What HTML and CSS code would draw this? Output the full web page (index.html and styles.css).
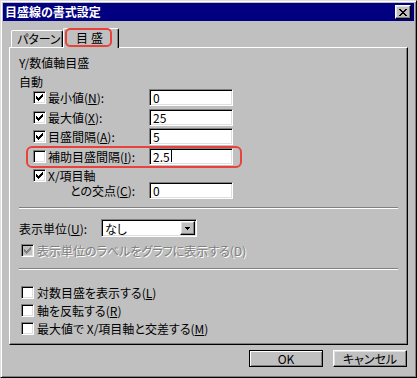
FILE: index.html
```html
<!DOCTYPE html>
<html lang="ja">
<head>
    <meta charset="UTF-8">
    <meta name="viewport" content="width=device-width, initial-scale=1.0">
    <title>目盛線の書式設定</title>
    <link rel="stylesheet" href="styles.css">
</head>
<body>
    <div class="window">
        <div class="titlebar">
            <span class="title">目盛線の書式設定</span>
            <span class="close-btn">
                <svg viewBox="0 0 8 7" width="8" height="7" shape-rendering="crispEdges"><path d="M0 0h2v1h-2zM6 0h2v1h-2zM1 1h2v1h-2zM5 1h2v1h-2zM2 2h4v1h-4zM3 3h2v1h-2zM2 4h4v1h-4zM1 5h2v1h-2zM5 5h2v1h-2zM0 6h2v1h-2zM6 6h2v1h-2z"/></svg>
            </span>
        </div>
        <div class="dialog">
            <div class="tabs">
                <div class="tab">パターン</div>
                <div class="tab tab-active"><span class="tab-mark"></span>目盛</div>
            </div>
            <div class="panel">
                <div class="heading">Y/数値軸目盛</div>
                <div class="heading sub">自動</div>
                <div class="scale">
                    <div class="row">
                        <span class="cb"><svg viewBox="0 0 7 7" width="7" height="7" shape-rendering="crispEdges"><path d="M6 0h1v1h-1zM5 1h2v1h-2zM0 2h1v1h-1zM4 2h3v1h-3zM0 3h2v1h-2zM3 3h3v1h-3zM0 4h5v1h-5zM1 5h3v1h-3zM2 6h1v1h-1z"/></svg></span>
                        <span class="label">最小値(<u>N</u>):</span>
                        <span class="field">0</span>
                    </div>
                    <div class="row">
                        <span class="cb"><svg viewBox="0 0 7 7" width="7" height="7" shape-rendering="crispEdges"><path d="M6 0h1v1h-1zM5 1h2v1h-2zM0 2h1v1h-1zM4 2h3v1h-3zM0 3h2v1h-2zM3 3h3v1h-3zM0 4h5v1h-5zM1 5h3v1h-3zM2 6h1v1h-1z"/></svg></span>
                        <span class="label">最大値(<u>X</u>):</span>
                        <span class="field">25</span>
                    </div>
                    <div class="row">
                        <span class="cb"><svg viewBox="0 0 7 7" width="7" height="7" shape-rendering="crispEdges"><path d="M6 0h1v1h-1zM5 1h2v1h-2zM0 2h1v1h-1zM4 2h3v1h-3zM0 3h2v1h-2zM3 3h3v1h-3zM0 4h5v1h-5zM1 5h3v1h-3zM2 6h1v1h-1z"/></svg></span>
                        <span class="label">目盛間隔(<u>A</u>):</span>
                        <span class="field">5</span>
                    </div>
                    <div class="row row-mark">
                        <span class="cb"></span>
                        <span class="label">補助目盛間隔(<u>I</u>):</span>
                        <span class="field">2.5<span class="caret"></span></span>
                    </div>
                    <div class="row row-x">
                        <span class="cb"><svg viewBox="0 0 7 7" width="7" height="7" shape-rendering="crispEdges"><path d="M6 0h1v1h-1zM5 1h2v1h-2zM0 2h1v1h-1zM4 2h3v1h-3zM0 3h2v1h-2zM3 3h3v1h-3zM0 4h5v1h-5zM1 5h3v1h-3zM2 6h1v1h-1z"/></svg></span>
                        <span class="label">X/項目軸</span>
                    </div>
                    <div class="row row-cross">
                        <span class="label">との交点(<u>C</u>):</span>
                        <span class="field">0</span>
                    </div>
                </div>

                <div class="sep"></div>

                <div class="unit-row">
                    <span class="label">表示単位(<u>U</u>):</span>
                    <span class="select">
                        <span class="select-text">なし</span>
                        <span class="select-btn"><svg viewBox="0 0 5 3" width="5" height="3" shape-rendering="crispEdges"><path d="M0 0h5v1h-5zM1 1h3v1h-3zM2 2h1v1h-1z"/></svg></span>
                    </span>
                </div>
                <div class="check-row disabled">
                    <span class="cb"><svg viewBox="0 0 7 7" width="7" height="7" shape-rendering="crispEdges"><path d="M6 0h1v1h-1zM5 1h2v1h-2zM0 2h1v1h-1zM4 2h3v1h-3zM0 3h2v1h-2zM3 3h3v1h-3zM0 4h5v1h-5zM1 5h3v1h-3zM2 6h1v1h-1z"/></svg></span>
                    <span>表示単位のラベルをグラフに表示する(D)</span>
                </div>

                <div class="sep sep-low"></div>

                <div class="options">
                    <div class="check-row">
                        <span class="cb"></span>
                        <span>対数目盛を表示する(<u>L</u>)</span>
                    </div>
                    <div class="check-row">
                        <span class="cb"></span>
                        <span>軸を反転する(<u>R</u>)</span>
                    </div>
                    <div class="check-row">
                        <span class="cb"></span>
                        <span>最大値で X/項目軸と交差する(<u>M</u>)</span>
                    </div>
                </div>
            </div>
            <div class="buttons">
                <span class="btn btn-default">OK</span>
                <span class="btn">キャンセル</span>
            </div>
        </div>
    </div>
</body>
</html>
```

FILE: styles.css
```css
* {
    box-sizing: border-box;
}
body {
    margin: 0;
    background-color: #c0c0c0;
    font-family: "Noto Sans CJK JP", "Noto Sans", sans-serif;
    font-size: 12px;
    font-feature-settings: "palt";
    color: #000;
}
.window {
    width: 417px;
    height: 378px;
    padding: 2px;
    border: 1px solid;
    border-color: #dfdfdf #000 #000 #dfdfdf;
    box-shadow: inset 1px 1px 0 #fff, inset -1px -1px 0 #808080;
}
.titlebar {
    height: 18px;
    background-color: #000080;
    display: flex;
    align-items: center;
    justify-content: space-between;
    padding: 0 3px 0 2px;
}
.title {
    color: #fff;
    font-weight: bold;
    line-height: 18px;
}
.close-btn,
.select-btn,
.btn {
    background-color: #c0c0c0;
    border: 1px solid;
    border-color: #fff #000 #000 #fff;
    box-shadow: inset -1px -1px 0 #808080, inset 1px 1px 0 #dfdfdf;
}
.close-btn {
    width: 16px;
    height: 14px;
    display: flex;
    align-items: center;
    justify-content: center;
    padding-right: 1px;
}
.close-btn svg,
.cb svg,
.select-btn svg {
    display: block;
}
.dialog {
    padding: 7px 6px 0;
}
.tabs {
    display: flex;
    align-items: flex-end;
    height: 19px;
    padding-left: 2px;
}
.tab {
    width: 52px;
    height: 17px;
    padding-left: 5px;
    border-top: 1px solid #fff;
    border-left: 1px solid #fff;
    border-right: 1px solid #000;
    border-radius: 2px 2px 0 0;
    box-shadow: inset -1px 0 0 #808080;
    line-height: 15px;
}
.tab-active {
    position: relative;
    z-index: 1;
    width: 56px;
    height: 20px;
    margin-bottom: -1px;
    padding-left: 0;
    background-color: #c0c0c0;
    text-align: center;
    letter-spacing: 3px;
    line-height: 18px;
}
.tab-mark {
    position: absolute;
    left: 1px;
    top: -1px;
    width: 47px;
    height: 19px;
    border: 2px solid #e8423d;
    border-radius: 5px;
}
.panel {
    height: 298px;
    border: 1px solid;
    border-color: #fff #000 #000 #fff;
    box-shadow: inset -1px -1px 0 #808080;
    padding: 8px 9px 0 9px;
}
.heading {
    line-height: 14px;
}
.sub {
    margin-top: 5px;
    line-height: 13px;
}
.scale {
    width: 200px;
    margin-left: 14px;
}
.row {
    display: flex;
    align-items: center;
    height: 19.5px;
}
.cb {
    flex: none;
    width: 13px;
    height: 13px;
    background-color: #fff;
    border: 1px solid;
    border-color: #808080 #fff #fff #808080;
    box-shadow: inset 1px 1px 0 #000, inset -1px -1px 0 #dfdfdf;
    display: flex;
    align-items: center;
    justify-content: center;
}
.row .cb {
    margin-right: 2px;
}
.label {
    width: 101px;
    white-space: nowrap;
}
.field {
    align-self: flex-start;
    margin-top: 1px;
    width: 84px;
    height: 17px;
    background-color: #fff;
    border: 1px solid;
    border-color: #808080 #fff #fff #808080;
    box-shadow: inset 1px 1px 0 #000, inset -1px -1px 0 #dfdfdf;
    padding-left: 3px;
    display: flex;
    align-items: center;
    line-height: 13px;
}
.caret {
    width: 1px;
    height: 12px;
    margin-left: 1px;
    background-color: #000;
}
.row-mark {
    position: relative;
}
.row-mark::after {
    content: "";
    position: absolute;
    left: -7px;
    right: -9px;
    top: -1px;
    bottom: -2px;
    border: 2px solid #e8423d;
    border-radius: 6px;
}
.row-x {
    height: 18px;
}
.row-cross {
    height: 17px;
    margin-top: -2px;
    padding-left: 37px;
}
.row-cross .label {
    width: 79px;
}
.row-cross .field {
    margin-top: 0;
}
.sep {
    height: 2px;
    margin-top: 8px;
    border-top: 1px solid #808080;
    border-bottom: 1px solid #fff;
}
.sep-low {
    margin-top: 10px;
}
.unit-row {
    display: flex;
    align-items: center;
    height: 18px;
    margin-top: 10px;
}
.unit-row .label {
    width: 82px;
}
.select {
    width: 96px;
    height: 18px;
    background-color: #fff;
    border: 1px solid;
    border-color: #808080 #fff #fff #808080;
    box-shadow: inset 1px 1px 0 #000, inset -1px -1px 0 #dfdfdf;
    padding: 1px 1px 1px 3px;
    display: flex;
    align-items: center;
}
.select-text {
    flex: 1;
}
.select-btn {
    width: 15px;
    height: 14px;
    display: flex;
    align-items: center;
    justify-content: center;
}
.check-row {
    display: flex;
    align-items: center;
    height: 16px;
    margin-left: 2px;
    white-space: nowrap;
}
.check-row .cb {
    margin-right: 3px;
}
.disabled {
    margin-top: 5px;
    color: #808080;
    text-shadow: 1px 1px 0 #fff;
}
.disabled .cb {
    background-color: #c0c0c0;
}
.disabled .cb svg {
    fill: #808080;
}
.options {
    margin-top: 13px;
}
.options .check-row {
    height: 18px;
}
.buttons {
    display: flex;
    justify-content: flex-end;
    gap: 10px;
    margin-top: 5px;
    padding-right: 1px;
}
.btn {
    width: 74px;
    height: 17px;
    text-align: center;
    line-height: 15px;
}
.btn-default {
    border-color: #000;
    box-shadow: inset 1px 1px 0 #fff, inset -1px -1px 0 #808080;
}
```
